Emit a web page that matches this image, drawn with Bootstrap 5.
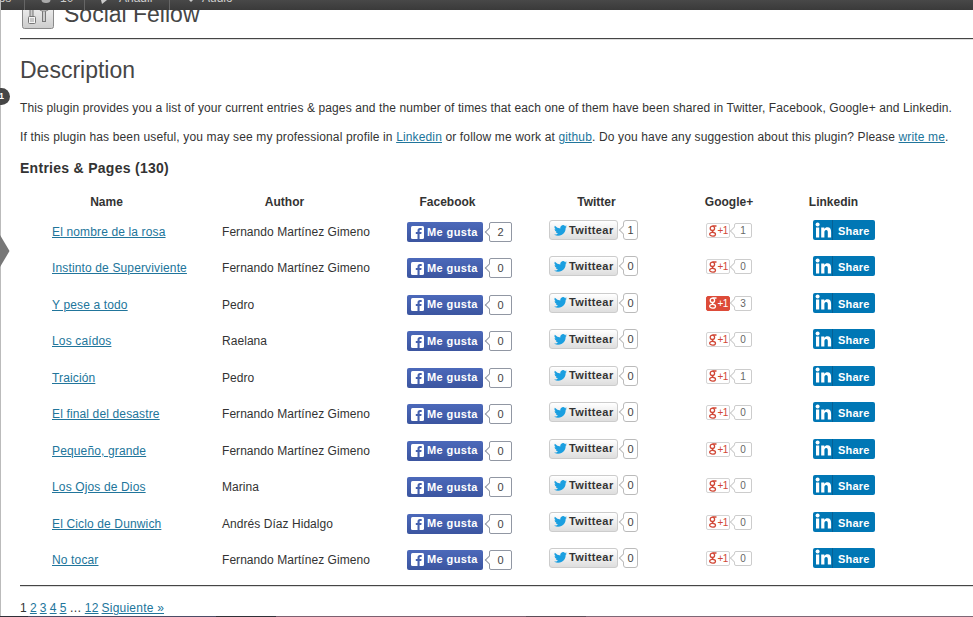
<!DOCTYPE html>
<html lang="en">
<head>
<meta charset="utf-8">
<title>Social Fellow</title>
<link href="https://cdn.jsdelivr.net/npm/bootstrap@5.3.0/dist/css/bootstrap.min.css" rel="stylesheet">
<style>
body{font:12px/17px "Liberation Sans",Arial,sans-serif;color:#333;height:617px;background:#fff}
a{color:#21759b}
.page{height:617px;border-left:1px solid #bbb}
.adminbar{height:10px;background:linear-gradient(#484848,#3a3a3a);color:#ccc;z-index:3;line-height:14px}
.adminbar .sep{width:1px;height:10px;background:#666}
.adminbar span{margin-top:-9px}
.w-a{width:23px;margin-left:-5px;padding-right:5px;box-sizing:content-box}
.w-b{width:26px;padding-left:2px}
.w-c{width:50px}
.content{padding-left:19px;margin-top:-14px}
.titlebar{height:43px;border-bottom:1px solid #454545;box-shadow:0 1px #ddd}
.titlebar svg{margin-top:-2px}
.titlebar h1{font-size:23px;line-height:36px;color:#464646;margin:0 0 0 8px}
.section{font-size:23px;line-height:30px;color:#464646;font-weight:400;margin:16px 0 15px}
.p1{letter-spacing:.11px}
.p2{letter-spacing:.14px;margin-top:12px}
.entries{font-size:14px;line-height:20px;font-weight:700;margin:12px 0 0;letter-spacing:.28px}
.stats{width:863px;table-layout:fixed;margin-bottom:1px}
.stats th,.stats td{padding:0}
.stats th{height:42px;padding:6px 0 0 1px;vertical-align:middle;text-align:center}
.stats td{height:36.44px;vertical-align:top;line-height:17px;padding-left:31px}
.stats td:nth-child(1){padding:4px 0 0 32px;letter-spacing:.14px}
.stats td:nth-child(2){padding:4px 0 0 30px;letter-spacing:.05px}
.stats td:nth-child(3){padding-top:2px}
.stats td:nth-child(5){padding:3px 0 0 32px}
.stats td:nth-child(6){padding-left:30px}
.rule{height:2px;background:linear-gradient(#454545 50%,#ddd 50%)}
.fb,.tw,.gp,.li{line-height:1;white-space:nowrap}
.fb{width:76px;height:20px;border-radius:2px;background:linear-gradient(#4c69ba,#3b55a0);color:#fff;font-weight:700;font-size:11px;letter-spacing:.4px;padding-left:4px;gap:3px}
.tw{width:69px;height:20px;border:1px solid #ccc;border-radius:3px;background:linear-gradient(#fff,#dedede);color:#333;font-weight:700;font-size:11px;letter-spacing:.4px;padding-left:4px;gap:2px}
.gp{width:24px;height:15px;border:1px solid #d4d4d4;border-radius:2px;color:#d14836;background:#fff}
.gp.on{background:#dd4b39;border-color:#dd4b39;color:#fff}
.gp svg{margin-right:1px}
.gp i{font:10px/13px "Liberation Sans",sans-serif;letter-spacing:-.8px}
.li{width:62px;height:20px;border-radius:2px;background:#0077b5;color:#fff;font-weight:700;font-size:11px;letter-spacing:.2px}
.li .txt{border-left:1px solid #066094;height:20px;padding-left:5px;line-height:22px}
.li svg{margin-left:2px}
.bubble{position:relative;border:1px solid #bbb;border-radius:2px;background:#fff;text-align:center;font-size:11px;color:#444}
.bubble::before{content:"";position:absolute;left:-4px;top:50%;width:6px;height:6px;margin-top:-3px;background:#fff;border:solid #bbb;border-width:0 0 1px 1px;transform:rotate(45deg)}
.bubble.f{width:23px;height:20px;margin-left:6px;line-height:19px;border-color:#9197a3}
.bubble.f::before{border-color:#9197a3}
.bubble.t{width:15px;height:20px;margin-left:5px;line-height:18px;border-radius:3px}
.bubble.g{width:18px;height:15px;margin-left:4px;line-height:14px;font-size:10px;border-color:#ccc;color:#666}
.bubble.g::before{border-color:#ccc}
.count-dot{position:absolute;left:-9px;top:88px;width:19px;height:17px;border-radius:9px;background:#464646;color:#fff;font:700 9px/17px "Liberation Sans",sans-serif;padding-left:8px}
.menu-arrow{position:absolute;left:0;top:235px}
.pager{margin-top:13px;gap:3px;letter-spacing:.22px}
.taskbar{position:absolute;left:0;right:0;top:616px;height:1px;background:linear-gradient(90deg,#2f2f38 0 28px,#4c4c66 28px 216px,#303038 216px 276px,#7c6070 276px 526px,#5c4c57 526px 586px,#7e6776 586px)}
</style>
<script src="https://cdn.jsdelivr.net/npm/bootstrap@5.3.0/dist/js/bootstrap.bundle.min.js"></script>
</head>
<body class="position-relative overflow-hidden">
<svg class="d-none">
<symbol id="i-fb" viewBox="0 0 13 13"><rect width="13" height="13" rx="1.500" fill="#fff"/><path fill="#4460ae" d="M6.500 13V8H4.800V6h1.700V4.700C6.500 3 7.500 2.100 9 2.100h1.700V4H9.500c-.7 0-.9.300-.9.900V6h2l-.3 2H8.600v5z"/></symbol>
<symbol id="i-tw" viewBox="0 0 24 20"><path fill="#1b9fe0" d="M24 2.400a10 10 0 0 1-2.800.8A5 5 0 0 0 23.300.4a10 10 0 0 1-3.100 1.200 4.900 4.900 0 0 0-8.400 4.500A14 14 0 0 1 1.700 1a4.900 4.900 0 0 0 1.500 6.600A5 5 0 0 1 1 7v.1a4.900 4.900 0 0 0 3.900 4.800 5 5 0 0 1-2.200.1 4.900 4.900 0 0 0 4.600 3.400A9.900 9.900 0 0 1 0 17.500 14 14 0 0 0 21.500 5a10 10 0 0 0 2.500-2.600z"/></symbol>
<symbol id="i-gp" viewBox="0 0 8 12"><g fill="none" stroke="currentColor" stroke-width="1.300"><ellipse cx="3.400" cy="3.300" rx="2.200" ry="2.200"/><path d="M3.500 1H7.500M4.200 5.500C2.800 6.300 3.300 6.800 4.500 7.400"/><ellipse cx="3.600" cy="9.200" rx="2.900" ry="1.900"/></g></symbol>
<symbol id="i-in" viewBox="0 0 17 17"><g fill="#fff"><circle cx="2.600" cy="2.400" r="2"/><path d="M1 5.500h3.200V15.500H1zM6.200 5.500h3.100v1.400C10 5.800 11 5.200 12.400 5.200c2.800 0 3.700 1.800 3.700 4.600v5.700h-3.300v-5.200c0-1.500-.3-2.400-1.600-2.400s-1.800.9-1.800 2.400v5.200H6.200z"/></g></symbol>
</svg>
<div class="page">
<nav class="adminbar d-flex position-relative overflow-hidden">
<span class="w-a">ios</span><div class="sep"></div>
<svg class="ms-3" width="17" height="5"><ellipse cx="5" cy="0" rx="4.500" ry="3" fill="#aaa"/></svg><span class="w-b">10</span><div class="sep"></div>
<svg class="ms-3" width="18" height="5"><path d="M0 0h6L1 4z" fill="#ccc"/></svg><span class="w-c">Añadir</span><div class="sep"></div>
<svg class="ms-3" width="16" height="5"><path d="M3 0h4L5 2z" fill="#ccc"/></svg><span>Audio</span>
</nav>
<main class="content">
<header class="titlebar d-flex align-items-start">
<svg width="36" height="36"><defs><linearGradient id="g" x2="0" y2="1"><stop stop-color="#fff"/><stop offset="1" stop-color="#ccc"/></linearGradient></defs><rect x="2.500" y="2.500" width="31" height="32" rx="2" fill="url(#g)" stroke="#8a8a8a"/><path d="M11.500 8v17M24 12v16" stroke="#777" stroke-width="4"/><path d="M11.500 8v17M24 12v15" stroke="#ccc" stroke-width="2"/><path d="M19 10v3q0 4 3 4h4q3 0 3-4v-3" fill="#ddd" stroke="#888"/><rect x="8.500" y="22.500" width="7" height="7" rx="1" fill="#f5f5f5" stroke="#777"/><path d="M10 25h4M10 27h4" stroke="#999"/></svg>
<h1 class="fw-normal">Social Fellow</h1>
</header>
<h2 class="section">Description</h2>
<p class="mb-0 p1 text-nowrap">This plugin provides you a list of your current entries &amp; pages and the number of times that each one of them have been shared in Twitter, Facebook, Google+ and Linkedin.</p>
<p class="mb-0 p2 text-nowrap">If this plugin has been useful, you may see my professional profile in <a href="#">Linkedin</a> or follow me work at <a href="#">github</a>. Do you have any suggestion about this plugin? Please <a href="#">write me</a>.</p>
<h3 class="entries">Entries &amp; Pages (130)</h3>
<table class="stats">
<colgroup><col width="172"><col width="184"><col width="142"><col width="156"><col width="109"><col width="100"></colgroup>
<thead><tr><th>Name</th><th>Author</th><th>Facebook</th><th>Twitter</th><th>Google+</th><th>Linkedin</th></tr></thead>
<tbody id="rows"></tbody>
</table>
<div class="rule"></div>
<nav class="pager d-flex"><span>1</span><a href="#">2</a><a href="#">3</a><a href="#">4</a><a href="#">5</a><span>…</span><a href="#">12</a><a href="#">Siguiente »</a></nav>
</main>
</div>
<span class="count-dot">1</span>
<svg class="menu-arrow" width="10" height="32"><path d="M0 0l9.500 16L0 32z" fill="#777"/></svg>
<div class="taskbar"></div>
<script>
const F='Fernando Martínez Gimeno';
const entries=[['El nombre de la rosa',F,2,1,1],['Instinto de Superviviente',F,0,0,0],['Y pese a todo','Pedro',0,0,3,true],['Los caídos','Raelana',0,0,0],['Traición','Pedro',0,0,1],['El final del desastre',F,0,0,0],['Pequeño, grande',F,0,0,0],['Los Ojos de Dios','Marina',0,0,0],['El Ciclo de Dunwich','Andrés Díaz Hidalgo',0,0,0],['No tocar',F,0,0,0]];
document.getElementById('rows').innerHTML=entries.map(([n,a,f,t,g,on])=>`<tr>
<td><a href="#">${n}</a></td><td>${a}</td>
<td><div class="d-flex"><div class="fb d-flex align-items-center"><svg width="13" height="13"><use href="#i-fb"/></svg>Me gusta</div><div class="bubble f">${f}</div></div></td>
<td><div class="d-flex"><div class="tw d-flex align-items-center"><svg width="13" height="11"><use href="#i-tw"/></svg>Twittear</div><div class="bubble t">${t}</div></div></td>
<td><div class="d-flex"><div class="gp d-flex align-items-center justify-content-center${on?' on':''}"><svg width="8" height="12"><use href="#i-gp"/></svg><i>+1</i></div><div class="bubble g">${g}</div></div></td>
<td><div class="li d-flex align-items-center"><svg width="17" height="17"><use href="#i-in"/></svg><span class="txt">Share</span></div></td></tr>`).join('');
</script>
</body>
</html>
